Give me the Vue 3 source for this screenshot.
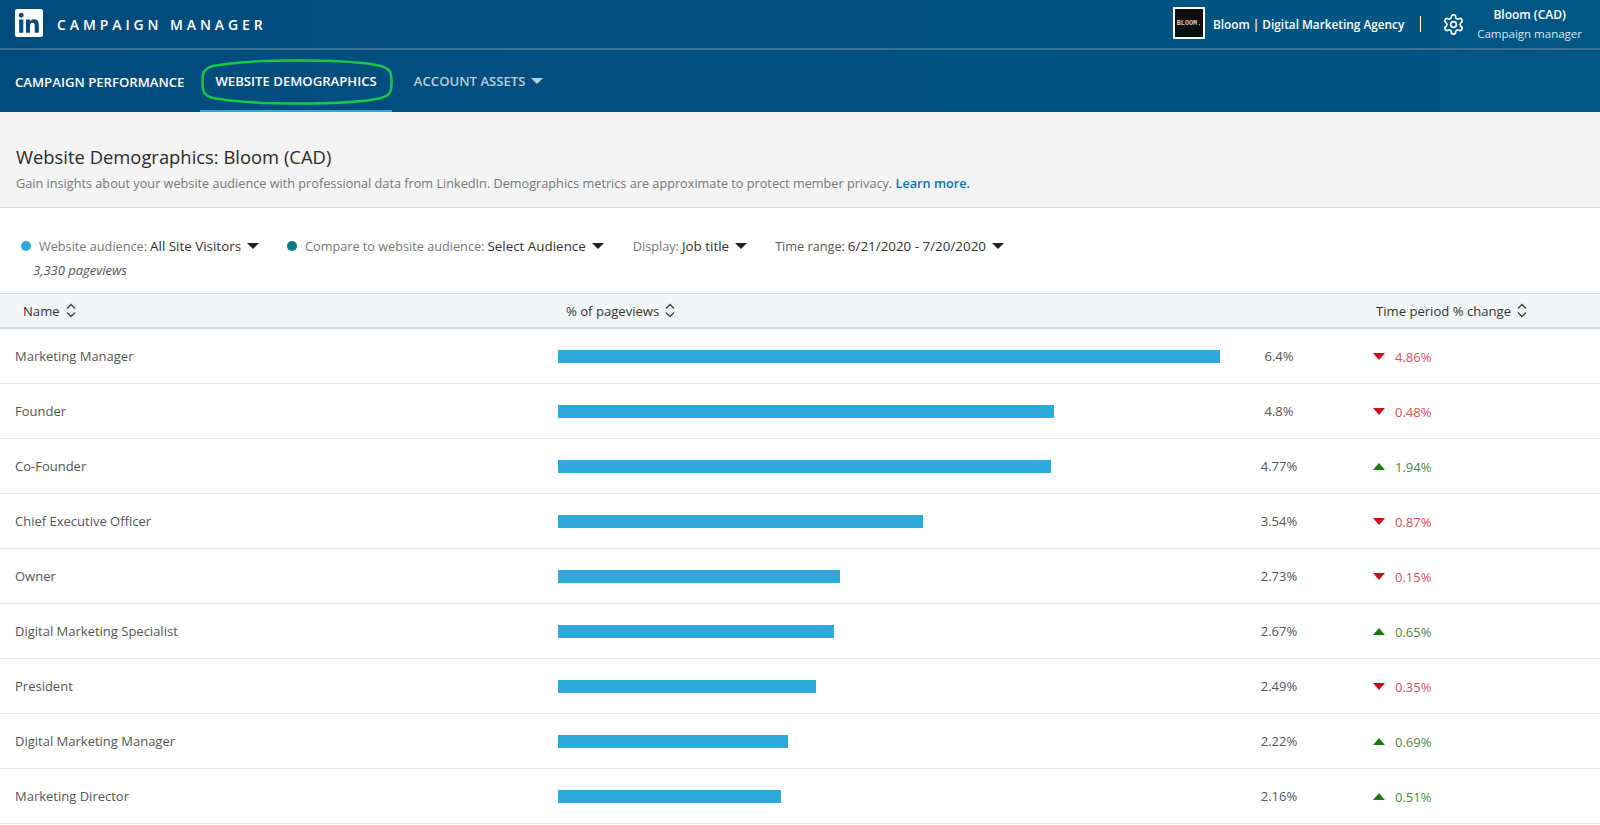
<script setup>
const rows = [
  { name: 'Marketing Manager', width: 662, pct: '6.4%', change: '4.86%', up: false },
  { name: 'Founder', width: 496, pct: '4.8%', change: '0.48%', up: false },
  { name: 'Co-Founder', width: 493, pct: '4.77%', change: '1.94%', up: true },
  { name: 'Chief Executive Officer', width: 365, pct: '3.54%', change: '0.87%', up: false },
  { name: 'Owner', width: 282, pct: '2.73%', change: '0.15%', up: false },
  { name: 'Digital Marketing Specialist', width: 276, pct: '2.67%', change: '0.65%', up: true },
  { name: 'President', width: 258, pct: '2.49%', change: '0.35%', up: false },
  { name: 'Digital Marketing Manager', width: 230, pct: '2.22%', change: '0.69%', up: true },
  { name: 'Marketing Director', width: 223, pct: '2.16%', change: '0.51%', up: true }
]
</script>

<template>
  <div class="page">
    <header class="header">
      <div class="topbar">
        <svg class="logo" viewBox="0 0 24 24"><path fill="#fff" d="M20.447 20.452h-3.554v-5.569c0-1.328-.027-3.037-1.852-3.037-1.853 0-2.136 1.445-2.136 2.939v5.667H9.351V9h3.414v1.561h.046c.477-.9 1.637-1.85 3.37-1.85 3.601 0 4.267 2.37 4.267 5.455v6.286zM5.337 7.433c-1.144 0-2.063-.926-2.063-2.065 0-1.138.92-2.063 2.063-2.063 1.14 0 2.064.925 2.064 2.063 0 1.139-.925 2.065-2.064 2.065zm1.782 13.019H3.555V9h3.564v11.452zM22.225 0H1.771C.792 0 0 .774 0 1.729v20.542C0 23.227.792 24 1.771 24h20.451C23.2 24 24 23.227 24 22.271V1.729C24 .774 23.2 0 22.222 0h.003z"/></svg>
        <span class="product">CAMPAIGN MANAGER</span>
        <div class="account">
          <div class="bloom-logo"><span>BLOOM.</span></div>
          <span class="agency">Bloom | Digital Marketing Agency</span>
          <span class="divider"></span>
          <svg class="gear" viewBox="0 0 24 24" fill="none" stroke="#fff" stroke-width="1.7" stroke-linecap="round" stroke-linejoin="round"><path d="M12.22 2h-.44a2 2 0 0 0-2 2v.18a2 2 0 0 1-1 1.73l-.43.25a2 2 0 0 1-2 0l-.15-.08a2 2 0 0 0-2.73.73l-.22.38a2 2 0 0 0 .73 2.73l.15.1a2 2 0 0 1 1 1.72v.51a2 2 0 0 1-1 1.74l-.15.09a2 2 0 0 0-.73 2.73l.22.38a2 2 0 0 0 2.73.73l.15-.08a2 2 0 0 1 2 0l.43.25a2 2 0 0 1 1 1.73V20a2 2 0 0 0 2 2h.44a2 2 0 0 0 2-2v-.18a2 2 0 0 1 1-1.73l.43-.25a2 2 0 0 1 2 0l.15.08a2 2 0 0 0 2.73-.73l.22-.39a2 2 0 0 0-.73-2.73l-.15-.08a2 2 0 0 1-1-1.74v-.5a2 2 0 0 1 1-1.74l.15-.09a2 2 0 0 0 .73-2.73l-.22-.38a2 2 0 0 0-2.73-.73l-.15.08a2 2 0 0 1-2 0l-.43-.25a2 2 0 0 1-1-1.73V4a2 2 0 0 0-2-2z"/><circle cx="12" cy="12" r="3"/></svg>
          <div class="acct-name">
            <strong>Bloom (CAD)</strong>
            <span>Campaign manager</span>
          </div>
        </div>
      </div>
      <nav class="nav">
        <a class="tab first">CAMPAIGN PERFORMANCE</a>
        <a class="tab active">WEBSITE DEMOGRAPHICS
          <svg class="ring" viewBox="0 0 192 46" fill="none" stroke="#16c84a" stroke-width="2.5"><path d="M1.5 23C1.5 14 2 10 12 7C40 2 70 1.5 96 1.5C125 1.5 160 2 180 7C190 10 190.5 14 190.5 23C190.5 32 190 36 180 39C160 44 125 44.5 96 44.5C70 44.5 40 44 12 39C2 36 1.5 32 1.5 23Z"/></svg>
        </a>
        <a class="tab muted">ACCOUNT ASSETS <i class="caret light"></i></a>
      </nav>
    </header>

    <section class="intro">
      <h1>Website Demographics: Bloom (CAD)</h1>
      <p>Gain insights about your website audience with professional data from LinkedIn. Demographics metrics are approximate to protect member privacy. <a>Learn more.</a></p>
    </section>

    <section class="filters">
      <div class="filter-group first">
        <div class="filter">
          <i class="dot blue"></i><span class="label">Website audience:</span><b>All Site Visitors</b><i class="caret"></i>
        </div>
        <em>3,330 pageviews</em>
      </div>
      <div class="filter second">
        <i class="dot teal"></i><span class="label">Compare to website audience:</span><b>Select Audience</b><i class="caret"></i>
      </div>
      <div class="filter third"><span class="label">Display:</span><b>Job title</b><i class="caret"></i></div>
      <div class="filter fourth"><span class="label dark">Time range:</span><b>6/21/2020 - 7/20/2020</b><i class="caret"></i></div>
    </section>

    <section class="table">
      <div class="thead">
        <div class="th name-h">Name <svg class="sort" viewBox="0 0 12 16" fill="none" stroke="#444" stroke-width="1.4"><path d="M2 6l4-4 4 4M2 10l4 4 4-4"/></svg></div>
        <div class="th pct-h">% of pageviews <svg class="sort" viewBox="0 0 12 16" fill="none" stroke="#444" stroke-width="1.4"><path d="M2 6l4-4 4 4M2 10l4 4 4-4"/></svg></div>
        <div class="th chg-h">Time period % change <svg class="sort" viewBox="0 0 12 16" fill="none" stroke="#444" stroke-width="1.4"><path d="M2 6l4-4 4 4M2 10l4 4 4-4"/></svg></div>
      </div>
      <div v-for="r in rows" :key="r.name" class="row">
        <div class="name">{{ r.name }}</div>
        <div class="bar-cell"><div class="bar" :style="{ width: r.width + 'px' }"></div></div>
        <div class="pct">{{ r.pct }}</div>
        <div class="change" :class="r.up ? 'up' : 'down'"><i class="tri"></i>{{ r.change }}</div>
      </div>
    </section>
  </div>
</template>

<style>
html, body { margin: 0; background: #fff; }
</style>

<style scoped>
.page { width: 1600px; height: 825px; overflow: hidden; font-family: "Open Sans", "Noto Sans", sans-serif; color: #333; font-size: 13px; }
i { display: inline-block; font-style: normal; }

.header { height: 112px; background: linear-gradient(90deg, #004b7c, #005784); color: #fff; display: flex; flex-direction: column; }
.topbar { height: 50px; flex: none; box-sizing: border-box; border-bottom: 2px solid #3b7097; display: flex; align-items: center; padding-left: 15px; padding-right: 18px; }
.logo { width: 28px; height: 28px; margin: 0 14px 2px 0; }
.product { font-size: 14px; font-weight: 600; letter-spacing: 3.9px; }
.account { margin-left: auto; display: flex; align-items: center; }
.bloom-logo { width: 32px; height: 32px; box-sizing: border-box; border: 2.5px solid #fff; background: #0c0f12; display: flex; align-items: center; justify-content: center; margin: 0 8px 2px 0; }
.bloom-logo span { font-family: "Liberation Mono", monospace; font-size: 6.8px; color: #ccc; font-weight: 700; letter-spacing: 0; }
.agency { font-size: 11.8px; font-weight: 600; }
.divider { width: 1px; height: 16px; background: #fff; margin: 0 21px 0 16px; }
.gear { width: 23px; height: 23px; margin-right: 12px; }
.acct-name { display: flex; flex-direction: column; align-items: center; font-size: 12px; line-height: 19px; }
.acct-name strong { font-weight: 600; }
.acct-name span { color: #dbe7ef; font-size: 11.5px; }

.nav { flex: 1; display: flex; }
.tab { position: relative; display: flex; align-items: center; box-sizing: border-box; height: 62px; padding: 2px 16px 0 15px; font-size: 13.15px; font-weight: 600; white-space: nowrap; }
.tab.active { border-bottom: 2px solid #2fa8dc; padding: 2px 15px 0 15px; }
.tab.muted { color: #b9cfde; margin-left: 8px; padding: 0 16px 0 14px; gap: 5px; }
.ring { position: absolute; left: 1px; top: 9px; width: 192px; height: 46px; }

.caret { width: 0; height: 0; border-left: 6px solid transparent; border-right: 6px solid transparent; border-top: 6px solid #222; margin-left: 6px; }
.caret.light { border-top-color: #b9cfde; margin-left: 0; }

.intro { height: 96px; box-sizing: border-box; background: #f4f4f4; border-bottom: 1px solid #d8d8d8; padding: 32px 16px 0; }
.intro h1 { margin: 0; font-size: 18.4px; font-weight: 400; line-height: 25px; color: #2a2a2a; }
.intro p { margin: 6px 0 0; font-size: 12.7px; line-height: 17px; color: #777; }
.intro a { color: #0b6eaa; font-weight: 600; }

.filters { height: 85px; box-sizing: border-box; display: flex; align-items: flex-start; padding: 29px 0 0 21px; }
.filter { display: flex; align-items: center; white-space: pre; font-size: 12.7px; line-height: 18px; }
.filter b { font-weight: 500; font-size: 13.4px; color: #333; margin-left: 3px; }
.label { color: #777; }
.label.dark { color: #555; }
.filter-group { display: flex; flex-direction: column; }
.filter-group em { margin: 6px 0 0 12px; font-size: 13px; line-height: 18px; color: #555; }
.dot { width: 10px; height: 10px; border-radius: 50%; margin-right: 8px; }
.dot.blue { background: #2fa8dc; }
.dot.teal { background: #0a7a8a; }
.second { margin-left: 28px; }
.third { margin-left: 29px; }
.fourth { margin-left: 28px; }

.thead { height: 36px; box-sizing: border-box; background: #f3f6f8; border-top: 1px solid #d8d8d8; border-bottom: 2px solid #d8d8d8; display: flex; align-items: center; }
.th { display: flex; align-items: center; gap: 5px; font-size: 13.1px; color: #333; white-space: nowrap; }
.name-h { width: 543px; padding-left: 23px; }
.pct-h { width: 810px; }
.sort { width: 12px; height: 17px; }

.row { height: 55px; box-sizing: border-box; border-bottom: 1px solid #e6e6e6; display: flex; align-items: center; }
.name { width: 558px; flex: none; padding-left: 15px; box-sizing: border-box; font-size: 13px; color: #555; }
.bar-cell { width: 693px; flex: none; }
.bar { height: 13px; background: #2fa8dc; }
.pct { width: 56px; margin-right: 66px; flex: none; font-size: 13px; color: #555; text-align: center; }
.change { display: flex; align-items: center; font-size: 13px; padding-top: 1px; }
.tri { width: 0; height: 0; border-left: 6px solid transparent; border-right: 6px solid transparent; margin-right: 10px; }
.down { color: #d4525e; }
.down .tri { border-top: 7px solid #cc0a1c; }
.up { color: #4a8a3f; }
.up .tri { border-bottom: 7px solid #1f7a12; }
</style>
